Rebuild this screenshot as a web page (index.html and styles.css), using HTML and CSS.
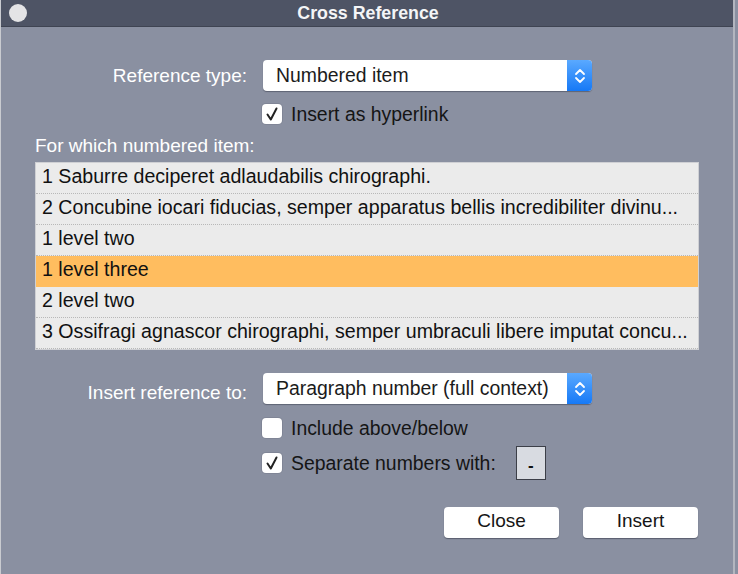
FILE: index.html
```html
<!DOCTYPE html>
<html>
<head>
<meta charset="utf-8">
<link rel="stylesheet" href="styles.css">
</head>
<body>
<div class="window">
  <div class="titlebar">
    <span class="close-dot"></span>
    <span class="title">Cross Reference</span>
  </div>
  <div class="content">
    <div class="form-row first">
      <span class="lbl">Reference type:</span>
      <div class="select">
        <span class="select-text">Numbered item</span>
        <span class="stepper">
          <svg width="12" height="18" viewBox="0 0 12 18"><path d="M2 7 L6 3 L10 7 M2 11 L6 15 L10 11" fill="none" stroke="#fff" stroke-width="1.8" stroke-linecap="round" stroke-linejoin="round"/></svg>
        </span>
      </div>
    </div>
    <div class="check-row hyper">
      <span class="box"><svg width="20" height="20" viewBox="0 0 20 20"><path d="M5.5 10.5 L8.8 15.5 L14.5 4.5" fill="none" stroke="#222" stroke-width="2" stroke-linecap="round" stroke-linejoin="round"/></svg></span>
      <span class="check-text">Insert as hyperlink</span>
    </div>
    <div class="section-label">For which numbered item:</div>
    <div class="list">
      <div class="item">1 Saburre deciperet adlaudabilis chirographi.</div>
      <div class="item">2 Concubine iocari fiducias, semper apparatus bellis incredibiliter divinu...</div>
      <div class="item">1 level two</div>
      <div class="item selected">1 level three</div>
      <div class="item">2 level two</div>
      <div class="item">3 Ossifragi agnascor chirographi, semper umbraculi libere imputat concu...</div>
    </div>
    <div class="form-row second">
      <span class="lbl">Insert reference to:</span>
      <div class="select">
        <span class="select-text">Paragraph number (full context)</span>
        <span class="stepper">
          <svg width="12" height="18" viewBox="0 0 12 18"><path d="M2 7 L6 3 L10 7 M2 11 L6 15 L10 11" fill="none" stroke="#fff" stroke-width="1.8" stroke-linecap="round" stroke-linejoin="round"/></svg>
        </span>
      </div>
    </div>
    <div class="check-row include">
      <span class="box"></span>
      <span class="check-text">Include above/below</span>
    </div>
    <div class="check-row separate">
      <span class="box"><svg width="20" height="20" viewBox="0 0 20 20"><path d="M5.5 10.5 L8.8 15.5 L14.5 4.5" fill="none" stroke="#222" stroke-width="2" stroke-linecap="round" stroke-linejoin="round"/></svg></span>
      <span class="check-text">Separate numbers with:</span>
      <span class="sep-field">-</span>
    </div>
    <div class="buttons">
      <button class="btn">Close</button>
      <button class="btn">Insert</button>
    </div>
  </div>
</div>
</body>
</html>
```

FILE: styles.css
```css
html, body {
  margin: 0;
  padding: 0;
  background: #8a90a1;
}
body {
  width: 738px;
  height: 574px;
  overflow: hidden;
  font-family: "Liberation Sans", Arial, sans-serif;
}
.window {
  width: 732px;
  height: 574px;
  background: #8a90a1;
  border-left: 1px solid #c9cbd0;
  border-right: 2px solid #b3b6bf;
  box-sizing: content-box;
}
.titlebar {
  height: 26px;
  background: #4e5465;
  border-bottom: 1px solid #3f4452;
  display: flex;
  align-items: center;
  justify-content: center;
  position: relative;
}
.close-dot {
  position: absolute;
  left: 8px;
  top: 4px;
  width: 18px;
  height: 18px;
  border-radius: 50%;
  background: #e4e4e6;
}
.title {
  color: #f4f5f7;
  font-size: 17.8px;
  font-weight: bold;
  margin-left: 2px;
}
.content {
  display: flex;
  flex-direction: column;
}
.form-row {
  display: flex;
  align-items: center;
  height: 31px;
}
.form-row.first { margin-top: 33px; }
.form-row.second { margin-top: 23px; }
.lbl {
  width: 246px;
  text-align: right;
  color: #ffffff;
  font-size: 19px;
  margin-top: 1px;
}
.form-row.second .lbl { margin-top: 8px; }
.select {
  width: 329px;
  height: 31px;
  background: #ffffff;
  border-radius: 4px;
  box-shadow: 0 1px 1px rgba(40, 44, 60, 0.45);
  display: flex;
  align-items: center;
  justify-content: space-between;
  overflow: hidden;
  margin-left: 16px;
}
.select-text {
  padding-left: 13px;
  font-size: 19.4px;
  color: #1b1b1b;
  margin-top: -1px;
}
.stepper {
  width: 25px;
  height: 31px;
  background: linear-gradient(#5aa9ff, #1679f6);
  display: flex;
  align-items: center;
  justify-content: center;
}
.check-row {
  display: flex;
  align-items: center;
  padding-left: 261px;
  height: 22px;
}
.check-row.hyper { margin-top: 12px; }
.check-row.include { margin-top: 13px; }
.check-row.separate { margin-top: 13px; }
.box {
  width: 20px;
  height: 20px;
  background: #ffffff;
  border-radius: 4px;
  box-shadow: 0 0 0 1px rgba(110, 115, 130, 0.35);
  display: flex;
  align-items: center;
  justify-content: center;
}
.check-text {
  margin-left: 9px;
  color: #151515;
  font-size: 19.4px;
}
.sep-field {
  margin-left: 20px;
  width: 30px;
  height: 34px;
  background: #d8dbe1;
  border: 1px solid #3c3f48;
  box-sizing: border-box;
  display: flex;
  align-items: center;
  justify-content: center;
  font-size: 17px;
  font-weight: bold;
  color: #111;
  padding-top: 6px;
}
.section-label {
  margin-top: 11px;
  padding-left: 34px;
  color: #ffffff;
  font-size: 19px;
  height: 20px;
  line-height: 20px;
}
.list {
  margin-top: 6px;
  margin-left: 34px;
  width: 662px;
  border: 1px solid #cfd0d4;
  background: #ebebeb;
}
.item {
  height: 30px;
  line-height: 27px;
  border-bottom: 1px dotted #b8b8b8;
  padding-left: 6px;
  font-size: 19.6px;
  color: #111;
  white-space: nowrap;
  overflow: hidden;
}
.item.selected {
  background: #ffbd5f;
  border-bottom-color: #ffbd5f;
}
.buttons {
  display: flex;
  justify-content: flex-end;
  gap: 24px;
  margin-top: 33px;
  padding-right: 35px;
}
.btn {
  width: 115px;
  height: 31px;
  background: #ffffff;
  border: none;
  border-radius: 4px;
  box-shadow: 0 1px 1px rgba(40, 44, 60, 0.5);
  font-family: "Liberation Sans", Arial, sans-serif;
  font-size: 19px;
  color: #151515;
  padding: 0 0 4px 0;
}
```
